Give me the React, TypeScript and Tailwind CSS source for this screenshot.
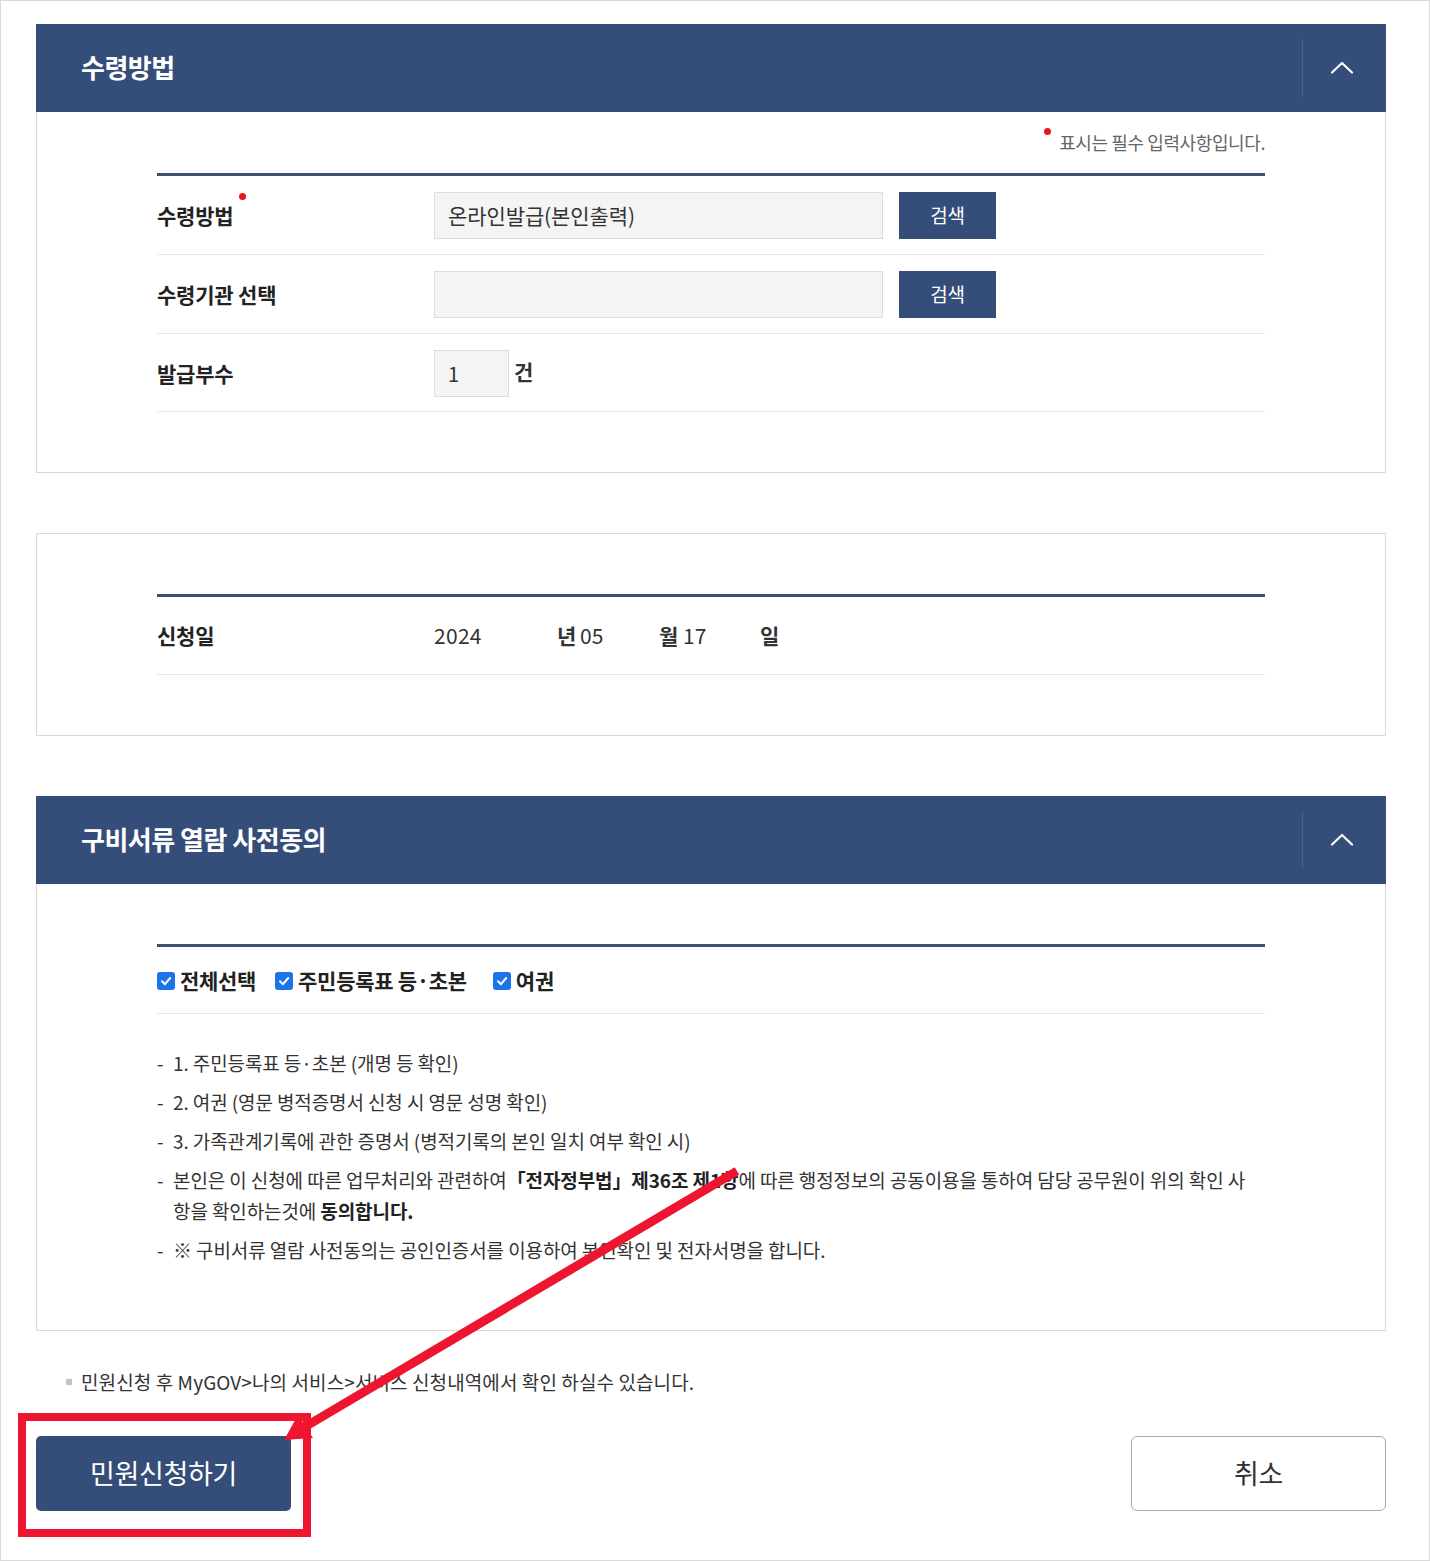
import React from "react";

const font = "font-['Noto_Sans_CJK_KR','Noto_Sans',sans-serif]";

const ChevronUp = () => (
  <svg width="24" height="14" viewBox="0 0 24 14" fill="none">
    <polyline points="2,12.5 12,3 22,12.5" stroke="#fff" strokeWidth="2.2" strokeLinecap="round" strokeLinejoin="round" />
  </svg>
);

const Check = () => (
  <span className="mr-[5px] flex h-[18px] w-[18px] shrink-0 items-center justify-center rounded-[3px] bg-[#1b74e8]">
    <svg width="12" height="12" viewBox="0 0 12 12" fill="none">
      <polyline points="2,6.3 5,9.2 10.2,3" stroke="#fff" strokeWidth="2" strokeLinecap="round" strokeLinejoin="round" />
    </svg>
  </span>
);

const PanelHeader = ({ title }: { title: string }) => (
  <div className="flex h-[88px] items-center justify-between bg-[#354d79]">
    <h2 className="pb-[3px] pl-[45px] text-[26px] font-bold tracking-[-0.5px] text-white">{title}</h2>
    <div className="flex h-[58px] w-[84px] items-center justify-center border-l border-[#4a6090] pb-[2px] pr-[6px]">
      <ChevronUp />
    </div>
  </div>
);

const RequiredDot = () => (
  <span className="absolute -right-[13px] -top-[7px] h-[7px] w-[7px] rounded-full bg-[#e3161c]" />
);

const FormRow = ({ label, required, children }: { label: string; required?: boolean; children: React.ReactNode }) => (
  <div className="flex items-center border-b border-[#e6e6e6] pb-[15px] pt-[16px] last:pb-[14px]">
    <div className="w-[277px] shrink-0">
      <span className="relative text-[21px] font-bold tracking-[-0.2px] text-[#222]">
        {label}
        {required && <RequiredDot />}
      </span>
    </div>
    {children}
  </div>
);

const SearchButton = () => (
  <button type="button" className="ml-[16px] h-[47px] w-[97px] bg-[#354d79] text-[19px] tracking-[-0.3px] text-white">
    검색
  </button>
);

const items: React.ReactNode[] = [
  "1. 주민등록표 등·초본 (개명 등 확인)",
  "2. 여권 (영문 병적증명서 신청 시 영문 성명 확인)",
  "3. 가족관계기록에 관한 증명서 (병적기록의 본인 일치 여부 확인 시)",
  <>
    본인은 이 신청에 따른 업무처리와 관련하여<b className="text-[#222]">「전자정부법」제36조 제1항</b>에 따른 행정정보의 공동이용을 통하여 담당 공무원이 위의 확인 사
    <br />
    항을 확인하는것에 <b className="text-[#222]">동의합니다.</b>
  </>,
  "※ 구비서류 열람 사전동의는 공인인증서를 이용하여 본인확인 및 전자서명을 합니다.",
];

export default function App() {
  return (
    <div className={`relative h-[1561px] w-[1430px] border border-[#d9d9d9] bg-white pl-[35px] pr-[43px] pt-[23px] ${font}`}>
      {/* 수령방법 */}
      <section>
        <PanelHeader title="수령방법" />
        <div className="border-x border-b border-[#d9d9d9] px-[120px] pb-[60px] pt-[15px]">
          <p className="flex items-start justify-end text-[18px] leading-[30px] tracking-[-0.4px] text-[#666]">
            <span className="mr-[8px] mt-[1px] h-[7px] w-[7px] rounded-full bg-[#e3161c]" />
            표시는 필수 입력사항입니다.
          </p>
          <div className="mt-[16px] border-t-[3px] border-[#3d5072]">
            <FormRow label="수령방법" required>
              <div className="flex h-[47px] w-[449px] items-center border border-[#dcdcdc] bg-[#f4f4f4] px-[13px] text-[21px] tracking-[-0.1px] text-[#333]">
                온라인발급(본인출력)
              </div>
              <SearchButton />
            </FormRow>
            <FormRow label="수령기관 선택">
              <div className="h-[47px] w-[449px] border border-[#dcdcdc] bg-[#f4f4f4]" />
              <SearchButton />
            </FormRow>
            <FormRow label="발급부수">
              <div className="flex h-[47px] w-[75px] items-center border border-[#dcdcdc] bg-[#f4f4f4] px-[13px] text-[20px] text-[#333]">
                1
              </div>
              <span className="mb-[3px] ml-[5px] text-[21px] font-bold text-[#333]">건</span>
            </FormRow>
          </div>
        </div>
      </section>

      {/* 신청일 */}
      <section className="mt-[60px] border border-[#d9d9d9] px-[120px] pb-[60px] pt-[60px]">
        <div className="border-t-[3px] border-[#3d5072]">
          <div className="flex h-[78px] items-center border-b border-[#e6e6e6]">
            <div className="w-[277px] shrink-0 text-[21px] font-bold tracking-[-0.2px] text-[#222]">신청일</div>
            <div className="flex items-center text-[21px] text-[#333]">
              <span className="w-[123px] tracking-[0.3px]">2024</span>
              <span className="w-[23px] font-bold">년</span>
              <span className="w-[79px]">05</span>
              <span className="w-[24px] font-bold">월</span>
              <span className="w-[77px]">17</span>
              <span className="font-bold">일</span>
            </div>
          </div>
        </div>
      </section>

      {/* 구비서류 열람 사전동의 */}
      <section className="mt-[60px]">
        <PanelHeader title="구비서류 열람 사전동의" />
        <div className="border-x border-b border-[#d9d9d9] px-[120px] pb-[65px] pt-[60px]">
          <div className="border-t-[3px] border-[#3d5072]">
            <div className="flex h-[67px] items-center border-b border-[#e6e6e6] pt-[2px] text-[21px] font-bold tracking-[-0.3px] text-[#222]">
              <label className="flex items-center">
                <Check />
                전체선택
              </label>
              <label className="ml-[19px] flex items-center">
                <Check />
                주민등록표 등·초본
              </label>
              <label className="ml-[26px] flex items-center">
                <Check />
                여권
              </label>
            </div>
            <ul className="flex flex-col gap-[8px] pt-[33px] text-[19px] leading-[31px] tracking-[-0.1px] text-[#333]">
              {items.map((item, i) => (
                <li key={i} className="flex">
                  <span className="w-[16px] shrink-0">-</span>
                  <span className="whitespace-nowrap">{item}</span>
                </li>
              ))}
            </ul>
          </div>
        </div>
      </section>

      <p className="mt-[36px] flex items-center pl-[30px] text-[19px] leading-[30px] tracking-[0.1px] text-[#333]">
        <span className="mr-[9px] h-[6px] w-[6px] bg-[#c4c4c4]" />
        민원신청 후 MyGOV&gt;나의 서비스&gt;서비스 신청내역에서 확인 하실수 있습니다.
      </p>

      <div className="mt-[39px] flex justify-between">
        <button type="button" className="h-[75px] w-[255px] rounded-[5px] bg-[#354d79] text-[27px] tracking-[-0.3px] text-white">
          민원신청하기
        </button>
        <button type="button" className="h-[75px] w-[255px] rounded-[6px] border border-[#a9a9a9] bg-white text-[27px] tracking-[-0.3px] text-[#333]">
          취소
        </button>
      </div>

      {/* red annotation */}
      <svg className="pointer-events-none absolute -left-px -top-px" width="1430" height="1561" viewBox="0 0 1430 1561">
        <rect x="22" y="1417" width="285" height="116" fill="none" stroke="#ee1530" strokeWidth="8" />
        <line x1="737" y1="1171" x2="303" y2="1428" stroke="#ee1530" strokeWidth="9" />
        <polygon points="284,1440 298,1415 313,1438" fill="#ee1530" />
      </svg>
    </div>
  );
}
